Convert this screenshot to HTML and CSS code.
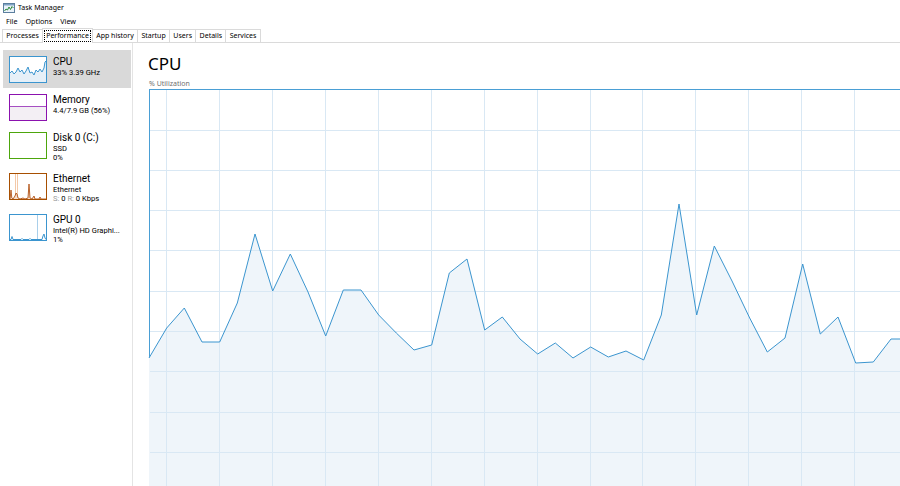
FILE: index.html
```html
<!DOCTYPE html>
<html>
<head>
<meta charset="utf-8">
<link rel="stylesheet" href="styles.css">
</head>
<body>
<div class="titlebar">
  <svg class="app-icon" width="12" height="10" viewBox="0 0 12 10">
    <rect x="0.5" y="0.5" width="11" height="9" fill="#eaf2fa" stroke="#5c7f9e"/>
    <rect x="1" y="1" width="10" height="1.5" fill="#7fa3c4"/>
    <polyline points="1.5,8 3,6 4.5,7 6,4 7.5,6.5 9,3.5 10.5,5" fill="none" stroke="#2e8b3a" stroke-width="1"/>
  </svg>
  <span>Task Manager</span>
</div>
<div class="menubar">
  <span class="menu-item">File</span>
  <span class="menu-item">Options</span>
  <span class="menu-item">View</span>
</div>
<div class="tabs">
  <div class="tab">Processes</div>
  <div class="tab tab-active"><span class="focus">Performance</span></div>
  <div class="tab">App history</div>
  <div class="tab">Startup</div>
  <div class="tab">Users</div>
  <div class="tab">Details</div>
  <div class="tab">Services</div>
</div>
<div class="main">
  <div class="sidebar">
    <div class="item item-selected">
      <div class="thumb thumb-cpu">
        <svg width="36" height="25" viewBox="0 0 36 25">
          <polygon points="0,16 2,14 4,17 6,15 8,11 10,15 12,13 14,17 16,14 18,10 20,16 22,15 24,18 26,13 28,15 30,12 32,15 34,11 35,5 36,4 36,25 0,25" fill="#e6f0f8"/>
          <polyline points="0,16 2,14 4,17 6,15 8,11 10,15 12,13 14,17 16,14 18,10 20,16 22,15 24,18 26,13 28,15 30,12 32,15 34,11 35,5 36,4" fill="none" stroke="#3b95cf" stroke-width="1"/>
        </svg>
      </div>
      <div class="info">
        <div class="name">CPU</div>
        <div class="sub">33% 3.39 GHz</div>
      </div>
    </div>
    <div class="item">
      <div class="thumb thumb-mem">
        <svg width="36" height="25" viewBox="0 0 36 25">
          <rect x="0" y="11" width="36" height="14" fill="#f3eff4"/>
          <line x1="0" y1="11.5" x2="36" y2="11.5" stroke="#a64fc2" stroke-width="1"/>
        </svg>
      </div>
      <div class="info">
        <div class="name">Memory</div>
        <div class="sub">4.4/7.9 GB (56%)</div>
      </div>
    </div>
    <div class="item">
      <div class="thumb thumb-disk"></div>
      <div class="info">
        <div class="name">Disk 0 (C:)</div>
        <div class="sub">SSD</div>
        <div class="sub">0%</div>
      </div>
    </div>
    <div class="item">
      <div class="thumb thumb-eth">
        <svg width="36" height="25" viewBox="0 0 36 25">
          <line x1="5.5" y1="0" x2="5.5" y2="25" stroke="#f3c9a9" stroke-width="1"/>
          <line x1="7.5" y1="0" x2="7.5" y2="25" stroke="#f3c9a9" stroke-width="1"/>
          <polygon points="0,25 0.5,21 1,16 1.8,24 3,25 5,22 6,19 7,20 8,24 10,25 13,24 15,25 18,24 19,10 20,24 22,25 24,22 25,25 29,25 30,23 31,25 36,25" fill="#f7dfcd"/>
          <polyline points="0,25 0.5,21 1,16 1.8,24 3,25 5,22 6,19 7,20 8,24 10,25 13,24 15,25 18,24 19,10 20,24 22,25 24,22 25,25 29,25 30,23 31,25 36,25" fill="none" stroke="#b9622a" stroke-width="1"/>
        </svg>
      </div>
      <div class="info">
        <div class="name">Ethernet</div>
        <div class="sub">Ethernet</div>
        <div class="sub"><span class="muted">S:</span> 0 <span class="muted">R:</span> 0 Kbps</div>
      </div>
    </div>
    <div class="item">
      <div class="thumb thumb-gpu">
        <svg width="36" height="25" viewBox="0 0 36 25">
          <line x1="27.5" y1="0" x2="27.5" y2="25" stroke="#a9cfea" stroke-width="1"/>
          <polyline points="0,24.5 1,24.5 2,21.5 3,24.5 11,24.5 12,23.5 13,24.5 19,24.5 20,23.5 21,24.5 32,24.5 33,21 34,19 35,23 36,24.5" fill="none" stroke="#3b95cf" stroke-width="1"/>
        </svg>
      </div>
      <div class="info">
        <div class="name">GPU 0</div>
        <div class="sub">Intel(R) HD Graphi...</div>
        <div class="sub">1%</div>
      </div>
    </div>
  </div>
  <div class="content">
    <div class="title">CPU</div>
    <div class="caption">% Utilization</div>
    <div class="chart">
      <svg width="760" height="410" viewBox="0 0 760 410">
        <polygon class="area" points="-1,268 16.7,238 34.3,218 52,252 69.7,252 87.3,213 105,144 122.7,201 140.3,164 158,202 175.7,246 193.3,200 211,200 228.7,225 246.3,243 264,260 281.7,255 299.3,183 317,169 334.7,240 352.3,227 370,249 387.7,264 405.3,253 423,268 440.7,257 458.3,267 476,261 493.7,270 511.3,225 529,114 546.7,225 564.3,156 582,191 599.7,228 617.3,262 635,248 652.7,174 670.3,244 688,227 705.7,273 723.3,272 741,249 760,249 760,410 -1,410"/>
        <g class="grid">
          <line x1="16.5" y1="0" x2="16.5" y2="410"/>
          <line x1="69.5" y1="0" x2="69.5" y2="410"/>
          <line x1="122.5" y1="0" x2="122.5" y2="410"/>
          <line x1="175.5" y1="0" x2="175.5" y2="410"/>
          <line x1="228.5" y1="0" x2="228.5" y2="410"/>
          <line x1="281.5" y1="0" x2="281.5" y2="410"/>
          <line x1="334.5" y1="0" x2="334.5" y2="410"/>
          <line x1="387.5" y1="0" x2="387.5" y2="410"/>
          <line x1="440.5" y1="0" x2="440.5" y2="410"/>
          <line x1="492.5" y1="0" x2="492.5" y2="410"/>
          <line x1="545.5" y1="0" x2="545.5" y2="410"/>
          <line x1="598.5" y1="0" x2="598.5" y2="410"/>
          <line x1="651.5" y1="0" x2="651.5" y2="410"/>
          <line x1="704.5" y1="0" x2="704.5" y2="410"/>
          <line x1="757.5" y1="0" x2="757.5" y2="410"/>
          <line x1="0" y1="40.5" x2="760" y2="40.5"/>
          <line x1="0" y1="80.5" x2="760" y2="80.5"/>
          <line x1="0" y1="120.5" x2="760" y2="120.5"/>
          <line x1="0" y1="160.5" x2="760" y2="160.5"/>
          <line x1="0" y1="201.5" x2="760" y2="201.5"/>
          <line x1="0" y1="241.5" x2="760" y2="241.5"/>
          <line x1="0" y1="281.5" x2="760" y2="281.5"/>
          <line x1="0" y1="322.5" x2="760" y2="322.5"/>
          <line x1="0" y1="362.5" x2="760" y2="362.5"/>
        </g>
        <polyline class="plot" points="-1,268 16.7,238 34.3,218 52,252 69.7,252 87.3,213 105,144 122.7,201 140.3,164 158,202 175.7,246 193.3,200 211,200 228.7,225 246.3,243 264,260 281.7,255 299.3,183 317,169 334.7,240 352.3,227 370,249 387.7,264 405.3,253 423,268 440.7,257 458.3,267 476,261 493.7,270 511.3,225 529,114 546.7,225 564.3,156 582,191 599.7,228 617.3,262 635,248 652.7,174 670.3,244 688,227 705.7,273 723.3,272 741,249 760,249"/>
      </svg>
    </div>
  </div>
</div>
</body>
</html>
```

FILE: styles.css
```css
* { box-sizing: border-box; }

html, body {
  margin: 0;
  padding: 0;
}

body {
  width: 900px;
  height: 486px;
  overflow: hidden;
  background: #ffffff;
  color: #000000;
  font-family: "Noto Sans", "Open Sans", sans-serif;
  font-size: 7.2px;
}

.titlebar {
  height: 14px;
  display: flex;
  align-items: center;
  gap: 3px;
  padding-left: 3px;
  padding-top: 1px;
  font-size: 7px;
}

.app-icon { display: block; }

.menubar {
  height: 13px;
  display: flex;
  align-items: center;
  padding-left: 2px;
}

.menu-item {
  padding: 0 4px;
}

.tabs {
  height: 16px;
  display: flex;
  align-items: flex-end;
  padding-left: 2px;
  border-bottom: 1px solid #dadada;
  font-size: 7px;
}

.tab {
  height: 13px;
  line-height: 12px;
  padding: 0 3.3px;
  border: 1px solid #dadada;
  border-bottom: none;
  margin-right: -1px;
  background: #ffffff;
  white-space: nowrap;
}

.tab-active {
  height: 15px;
  line-height: 13px;
  padding: 1px 1px 0 1px;
  margin-bottom: -1px;
  position: relative;
  z-index: 1;
}

.focus {
  display: block;
  padding: 0 1px;
  border: 1px dotted #000000;
  line-height: 10px;
}

.main {
  display: flex;
  height: 443px;
}

.sidebar {
  width: 133px;
  flex: none;
  padding-top: 7px;
  border-right: 1px solid #e4e4e4;
}

.item {
  display: flex;
  gap: 6px;
  margin-left: 3px;
  margin-right: 1px;
  padding: 6px 0 5px 6px;
}

.item-selected {
  background: #d9d9d9;
}

.thumb {
  width: 38px;
  height: 27px;
  flex: none;
  border: 1px solid;
  background: #ffffff;
}

.thumb svg { display: block; }

.thumb-cpu { border-color: #3b95cf; }
.thumb-mem { border-color: #8b12ae; }
.thumb-disk { border-color: #4da60c; }
.thumb-eth { border-color: #a74f01; }
.thumb-gpu { border-color: #3b95cf; }

.info {
  white-space: nowrap;
  font-family: Roboto, "Noto Sans", sans-serif;
}

.name {
  font-size: 10px;
  line-height: 12px;
}

.sub {
  font-size: 7.6px;
  line-height: 9px;
}

.muted { color: #9a9a9a; }

.content {
  flex: 1;
  min-width: 0;
  overflow: hidden;
  padding-top: 11px;
  padding-left: 16px;
}

.title {
  font-size: 17px;
  line-height: 20px;
  margin-left: -1px;
}

.caption {
  font-size: 7px;
  line-height: 9px;
  color: #707070;
  margin-top: 5px;
}

.chart {
  margin-top: 1px;
  width: 800px;
  height: 420px;
  border-left: 1px solid #4a9fd5;
  border-top: 1px solid #4a9fd5;
}

.chart svg {
  display: block;
  overflow: visible;
}

.area { fill: #eff5fa; }

.grid line {
  stroke: #d9e8f4;
  stroke-width: 1;
}

.plot {
  fill: none;
  stroke: #3b95cf;
  stroke-width: 1;
  stroke-linejoin: miter;
}
```
